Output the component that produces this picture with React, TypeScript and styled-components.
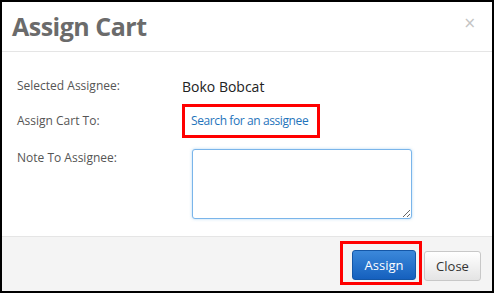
import React from 'react'
import styled, { createGlobalStyle } from 'styled-components'

const GlobalStyle = createGlobalStyle`
  *, *::before, *::after {
    box-sizing: border-box;
  }
  body {
    margin: 0;
    font-family: "Open Sans", "Noto Sans", sans-serif;
    background: #fff;
  }
`

const App = () => {
  const [note, setNote] = React.useState('')

  return (
    <>
      <GlobalStyle />
      <Modal>
        <Header>
          <Title>Assign Cart</Title>
          <CloseX aria-label="close">×</CloseX>
        </Header>
        <Body>
          <Row>
            <Label>Selected Assignee:</Label>
            <Value>Boko Bobcat</Value>
          </Row>
          <Row>
            <Label>Assign Cart To:</Label>
            <Highlight $pad="5px 9px 6px 6px">
              <Link href="#">Search for an assignee</Link>
            </Highlight>
          </Row>
          <Row $top>
            <Label>Note To Assignee:</Label>
            <Note
              autoFocus
              value={note}
              onChange={(e) => setNote(e.target.value)}
            />
          </Row>
        </Body>
        <Footer>
          <Highlight $pad="6px 3px 2px 9px">
            <Button $primary>Assign</Button>
          </Highlight>
          <Button>Close</Button>
        </Footer>
      </Modal>
    </>
  )
}

export default App

const Modal = styled.div`
  width: 494px;
  height: 293px;
  border: 2px solid #000;
  display: flex;
  flex-direction: column;
  background: #fff;
`

const Header = styled.div`
  height: 50px;
  flex-shrink: 0;
  border-bottom: 1px solid #e5e5e5;
  display: flex;
  align-items: center;
  justify-content: space-between;
  padding: 0 16px 0 10px;
`

const Title = styled.h1`
  margin: 0;
  font-size: 25px;
  font-weight: 700;
  color: #6b6b6b;
  letter-spacing: -0.5px;
  line-height: 1;
`

const CloseX = styled.span`
  font-family: "DejaVu Sans", sans-serif;
  font-size: 15px;
  color: #c4c4c4;
  margin-top: -8px;
  cursor: pointer;
`

const Body = styled.div`
  flex: 1;
  padding: 20px 0 0 15px;
  display: flex;
  flex-direction: column;
  gap: 4px;
`

const Row = styled.div<{ $top?: boolean }>`
  display: flex;
  align-items: ${(p) => (p.$top ? 'flex-start' : 'center')};
  min-height: 28px;
  margin-top: ${(p) => (p.$top ? '7px' : '0')};
`

const Label = styled.div`
  width: 165px;
  flex-shrink: 0;
  font-size: 12px;
  color: #555;
  line-height: 18px;
`

const Value = styled.div`
  font-size: 14px;
  color: #222;
`

const Highlight = styled.div<{ $pad: string }>`
  border: 3px solid #f00;
  padding: ${(p) => p.$pad};
  display: flex;
`

const Link = styled.a`
  font-size: 12px;
  color: #1f74bb;
  text-decoration: none;
  line-height: 17px;
  letter-spacing: -0.4px;
`

const Note = styled.textarea`
  margin-left: 10px;
  width: 220px;
  height: 70px;
  border: 1px solid #7ab5ea;
  border-radius: 3px;
  box-shadow: 0 0 3px rgba(102, 175, 233, 0.5);
  outline: none;
  padding: 6px;
  font-family: inherit;
  font-size: 13px;
`

const Footer = styled.div`
  height: 55px;
  flex-shrink: 0;
  border-top: 1px solid #e5e5e5;
  background: #f4f4f4;
  display: flex;
  justify-content: flex-end;
  align-items: flex-start;
  padding: 4px 11px 0 0;
  gap: 2px;
`

const Button = styled.button<{ $primary?: boolean }>`
  height: 30px;
  width: ${(p) => (p.$primary ? '64px' : '57px')};
  margin-top: ${(p) => (p.$primary ? '0' : '10px')};
  border-radius: 3px;
  font-family: inherit;
  font-size: 13px;
  cursor: pointer;
  border: 1px solid ${(p) => (p.$primary ? '#1456a6' : '#c8c8c8')};
  color: ${(p) => (p.$primary ? '#fff' : '#333')};
  background: ${(p) =>
    p.$primary
      ? 'linear-gradient(#3b88da, #1560be)'
      : 'linear-gradient(#ffffff, #e4e4e4)'};
`
